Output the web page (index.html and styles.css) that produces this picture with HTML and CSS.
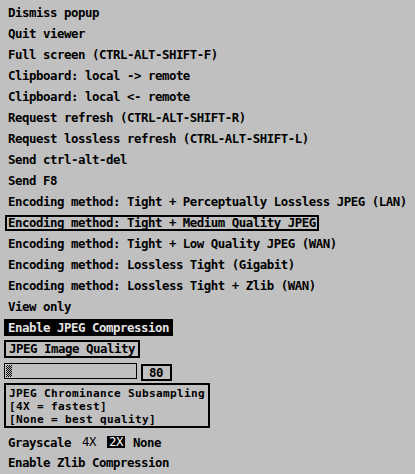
FILE: index.html
```html
<!DOCTYPE html>
<html>
<head>
<meta charset="utf-8">
<link rel="stylesheet" href="styles.css">
</head>
<body>
<div class="menu">
  <div class="item"><span class="label">Dismiss popup</span></div>
  <div class="item"><span class="label">Quit viewer</span></div>
  <div class="item"><span class="label">Full screen (CTRL-ALT-SHIFT-F)</span></div>
  <div class="item"><span class="label">Clipboard: local -&gt; remote</span></div>
  <div class="item"><span class="label">Clipboard: local &lt;- remote</span></div>
  <div class="item"><span class="label">Request refresh (CTRL-ALT-SHIFT-R)</span></div>
  <div class="item"><span class="label">Request lossless refresh (CTRL-ALT-SHIFT-L)</span></div>
  <div class="item"><span class="label">Send ctrl-alt-del</span></div>
  <div class="item"><span class="label">Send F8</span></div>
  <div class="item"><span class="label">Encoding method: Tight + Perceptually Lossless JPEG (LAN)</span></div>
  <div class="item"><span class="label focused">Encoding method: Tight + Medium Quality JPEG</span></div>
  <div class="item"><span class="label">Encoding method: Tight + Low Quality JPEG (WAN)</span></div>
  <div class="item"><span class="label">Encoding method: Lossless Tight (Gigabit)</span></div>
  <div class="item"><span class="label">Encoding method: Lossless Tight + Zlib (WAN)</span></div>
  <div class="item"><span class="label">View only</span></div>
  <div class="item"><span class="toggle-on">Enable JPEG Compression</span></div>
  <div class="item"><span class="button">JPEG Image Quality</span></div>
  <div class="slider-row">
    <div class="slider"><div class="thumb"></div></div>
    <div class="value">80</div>
  </div>
  <div class="info">
    <div class="info-line">JPEG Chrominance Subsampling</div>
    <div class="info-line">[4X = fastest]</div>
    <div class="info-line">[None = best quality]</div>
  </div>
  <div class="subsamp">
    <span class="opt-label">Grayscale</span>
    <span class="opt opt-4x">4X</span>
    <span class="opt opt-sel">2X</span>
    <span class="opt-none">None</span>
  </div>
  <div class="item"><span class="label">Enable Zlib Compression</span></div>
</div>
</body>
</html>
```

FILE: styles.css
```css
html, body {
  margin: 0;
  padding: 0;
  background: #c0c0c0;
}

body {
  width: 415px;
  height: 474px;
  overflow: hidden;
  font-family: "DejaVu Sans Mono", "Liberation Mono", monospace;
  font-weight: bold;
  font-size: 12.4px;
  letter-spacing: -0.465px;
  color: #000;
}

.menu {
  display: flex;
  flex-direction: column;
  padding: 2px 0 0 4px;
}

.item {
  height: 21px;
  display: flex;
  align-items: center;
  white-space: pre;
}

.label {
  display: inline-block;
  line-height: 12px;
  border: 2px solid transparent;
  padding: 0 2px;
}

.label.focused {
  border-color: #000;
  margin-left: 1px;
  padding: 0 1px;
}

.toggle-on {
  display: inline-block;
  line-height: 13px;
  background: #000;
  color: #e4e4e4;
  border: 2px solid #000;
  padding: 0 2px;
}

.button {
  display: inline-block;
  line-height: 14px;
  border: 2px solid #000;
  padding: 0 3px;
}

.slider-row {
  display: flex;
  align-items: flex-start;
  padding-top: 4px;
}

.slider {
  width: 130px;
  height: 14px;
  border: 1px solid #000;
  display: flex;
  align-items: center;
  padding-left: 1px;
}

.thumb {
  width: 6px;
  height: 12px;
  background: repeating-conic-gradient(#000 0 25%, #c0c0c0 0 50%) 0 0 / 2px 2px;
}

.value {
  margin: 1px 0 0 4px;
  line-height: 13px;
  border: 2px solid #000;
  padding: 0 7px 0 6px;
}

.info {
  align-self: flex-start;
  margin-top: 2px;
  border: 2px solid #000;
  padding: 2px 3px 0 3px;
}

.info-line {
  height: 13px;
  line-height: 13px;
  font-size: 11.1px;
  letter-spacing: 0.32px;
  white-space: pre;
}

.subsamp {
  display: flex;
  align-items: center;
  height: 20px;
  margin-top: 4px;
  padding-left: 4px;
  white-space: pre;
}

.opt {
  font-weight: normal;
  line-height: 12px;
}

.opt-4x {
  margin-left: 11px;
}

.opt-sel {
  margin-left: 11px;
  background: #000;
  color: #fff;
  padding: 0 2px;
}

.opt-none {
  margin-left: 8px;
}
```
